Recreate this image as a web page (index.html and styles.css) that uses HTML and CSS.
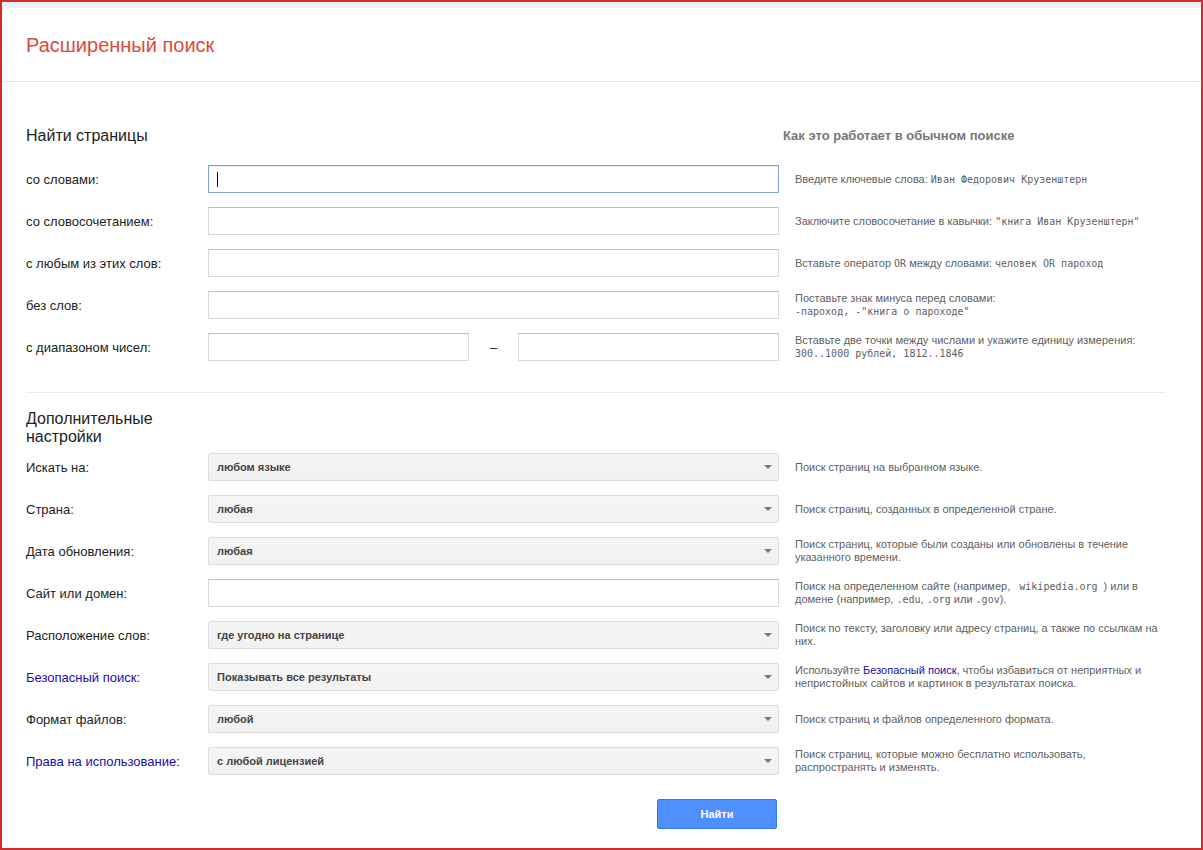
FILE: index.html
```html
<!DOCTYPE html>
<html lang="ru">
<head>
<meta charset="utf-8">
<title>Расширенный поиск</title>
<link rel="stylesheet" href="styles.css">
</head>
<body>
<div class="frame">
  <div class="topband"></div>
  <header class="header">
    <h1 class="title">Расширенный поиск</h1>
  </header>
  <main class="main">
    <div class="head-row">
      <h2 class="section-title">Найти страницы</h2>
      <h3 class="help-title">Как это работает в обычном поиске</h3>
    </div>

    <div class="row">
      <div class="label">со словами:</div>
      <div class="control"><div class="field focused"><span class="caret"></span></div></div>
      <div class="hint">Введите ключевые слова: <span class="mono">Иван Федорович Крузенштерн</span></div>
    </div>
    <div class="row">
      <div class="label">со словосочетанием:</div>
      <div class="control"><div class="field"></div></div>
      <div class="hint">Заключите словосочетание в кавычки: <span class="mono">"книга Иван Крузенштерн"</span></div>
    </div>
    <div class="row">
      <div class="label">с любым из этих слов:</div>
      <div class="control"><div class="field"></div></div>
      <div class="hint">Вставьте оператор <span class="mono">OR</span> между словами: <span class="mono">человек OR пароход</span></div>
    </div>
    <div class="row">
      <div class="label">без слов:</div>
      <div class="control"><div class="field"></div></div>
      <div class="hint">Поставьте знак минуса перед словами:<br><span class="mono">-пароход, -"книга о пароходе"</span></div>
    </div>
    <div class="row">
      <div class="label">с диапазоном чисел:</div>
      <div class="control range"><div class="field half"></div><span class="dash">–</span><div class="field half"></div></div>
      <div class="hint">Вставьте две точки между числами и укажите единицу измерения:<br><span class="mono">300..1000 рублей, 1812..1846</span></div>
    </div>

    <div class="divider"></div>

    <h2 class="section-title narrow">Дополнительные настройки</h2>

    <div class="row">
      <div class="label">Искать на:</div>
      <div class="control"><div class="select"><span>любом языке</span><i class="arrow"></i></div></div>
      <div class="hint">Поиск страниц на выбранном языке.</div>
    </div>
    <div class="row">
      <div class="label">Страна:</div>
      <div class="control"><div class="select"><span>любая</span><i class="arrow"></i></div></div>
      <div class="hint">Поиск страниц, созданных в определенной стране.</div>
    </div>
    <div class="row">
      <div class="label">Дата обновления:</div>
      <div class="control"><div class="select"><span>любая</span><i class="arrow"></i></div></div>
      <div class="hint">Поиск страниц, которые были созданы или обновлены в течение указанного времени.</div>
    </div>
    <div class="row">
      <div class="label">Сайт или домен:</div>
      <div class="control"><div class="field"></div></div>
      <div class="hint">Поиск на определенном сайте (например, <span class="mono">&nbsp;wikipedia.org </span>) или в домене (например, <span class="mono">.edu</span>, <span class="mono">.org</span> или <span class="mono">.gov</span>).</div>
    </div>
    <div class="row">
      <div class="label">Расположение слов:</div>
      <div class="control"><div class="select"><span>где угодно на странице</span><i class="arrow"></i></div></div>
      <div class="hint">Поиск по тексту, заголовку или адресу страниц, а также по ссылкам на них.</div>
    </div>
    <div class="row">
      <div class="label link">Безопасный поиск:</div>
      <div class="control"><div class="select"><span>Показывать все результаты</span><i class="arrow"></i></div></div>
      <div class="hint">Используйте <span class="link">Безопасный поиск</span>, чтобы избавиться от неприятных и непристойных сайтов и картинок в результатах поиска.</div>
    </div>
    <div class="row">
      <div class="label">Формат файлов:</div>
      <div class="control"><div class="select"><span>любой</span><i class="arrow"></i></div></div>
      <div class="hint">Поиск страниц и файлов определенного формата.</div>
    </div>
    <div class="row">
      <div class="label link">Права на использование:</div>
      <div class="control"><div class="select"><span>с любой лицензией</span><i class="arrow"></i></div></div>
      <div class="hint">Поиск страниц, которые можно бесплатно использовать, распространять и изменять.</div>
    </div>

    <div class="actions">
      <button class="btn" type="button">Найти</button>
    </div>
  </main>
</div>
</body>
</html>
```

FILE: styles.css
```css
* { box-sizing: border-box; }

html, body {
  margin: 0;
  padding: 0;
  background: #fff;
}

body {
  font-family: "Liberation Sans", Arial, sans-serif;
  color: #222;
}

.frame {
  width: 1203px;
  height: 850px;
  border: 2px solid #d42a2a;
  border-width: 2px 2px 2px 2px;
  overflow: hidden;
}

.topband {
  height: 6px;
  background: #eef0f2;
}

.header {
  height: 74px;
  border-bottom: 1px solid #e5e5e5;
  display: flex;
  align-items: center;
  padding-left: 24px;
}

.title {
  margin: 0;
  font-size: 20px;
  font-weight: normal;
  color: #dd4b39;
  line-height: 24px;
  padding-top: 1px;
}

.main {
  padding: 44px 0 0 24px;
}

.head-row {
  display: flex;
  align-items: center;
  height: 20px;
  margin-bottom: 12px;
}

.section-title {
  margin: 0;
  font-size: 16px;
  font-weight: normal;
  color: #222;
  line-height: 20px;
  width: 757px;
}

.section-title.narrow {
  width: 182px;
  line-height: 18px;
}

.help-title {
  margin: 0;
  font-size: 13px;
  font-weight: bold;
  color: #777;
  line-height: 20px;
}

.row {
  display: flex;
  align-items: center;
  height: 42px;
}

.label {
  width: 182px;
  font-size: 13px;
  color: #222;
  flex: none;
}

.link {
  color: #1a0dab;
}

.control {
  width: 571px;
  flex: none;
}

.control.range {
  display: flex;
  align-items: center;
  justify-content: space-between;
}

.field {
  height: 28px;
  width: 100%;
  background: #fff;
  border: 1px solid #d9d9d9;
  border-top-color: #c0c0c0;
  display: flex;
  align-items: center;
  padding-left: 8px;
}

.field.focused {
  border-color: #7f9fd6;
  box-shadow: inset 0 1px 2px rgba(0, 0, 0, 0.1);
}

.field.half {
  width: 261px;
}

.caret {
  display: inline-block;
  width: 1px;
  height: 15px;
  background: #000;
}

.dash {
  font-size: 13px;
  color: #222;
}

.hint {
  margin-left: 16px;
  width: 366px;
  font-size: 11px;
  line-height: 13px;
  color: #5f5f5f;
  flex: none;
}

.mono {
  font-family: "DejaVu Sans Mono", "Liberation Mono", monospace;
  font-size: 10px;
}

.divider {
  width: 1139px;
  height: 1px;
  background: #ebebeb;
  margin: 24px 0 17px;
}

.select {
  height: 28px;
  width: 100%;
  border: 1px solid #dcdcdc;
  border-radius: 2px;
  background: linear-gradient(#f5f5f5, #f1f1f1);
  display: flex;
  align-items: center;
  justify-content: space-between;
  padding: 0 6px 0 8px;
  font-size: 11px;
  font-weight: bold;
  color: #444;
}

.arrow {
  width: 0;
  height: 0;
  border-left: 4px solid transparent;
  border-right: 4px solid transparent;
  border-top: 4px solid #777;
}

.actions {
  width: 753px;
  display: flex;
  justify-content: flex-end;
  padding-right: 2px;
  margin-top: 17px;
}

.btn {
  width: 120px;
  height: 30px;
  background: #4d90fe;
  border: 1px solid #3079ed;
  border-radius: 2px;
  color: #fff;
  font-family: "Liberation Sans", Arial, sans-serif;
  font-size: 11px;
  font-weight: bold;
  padding: 0;
}
```
